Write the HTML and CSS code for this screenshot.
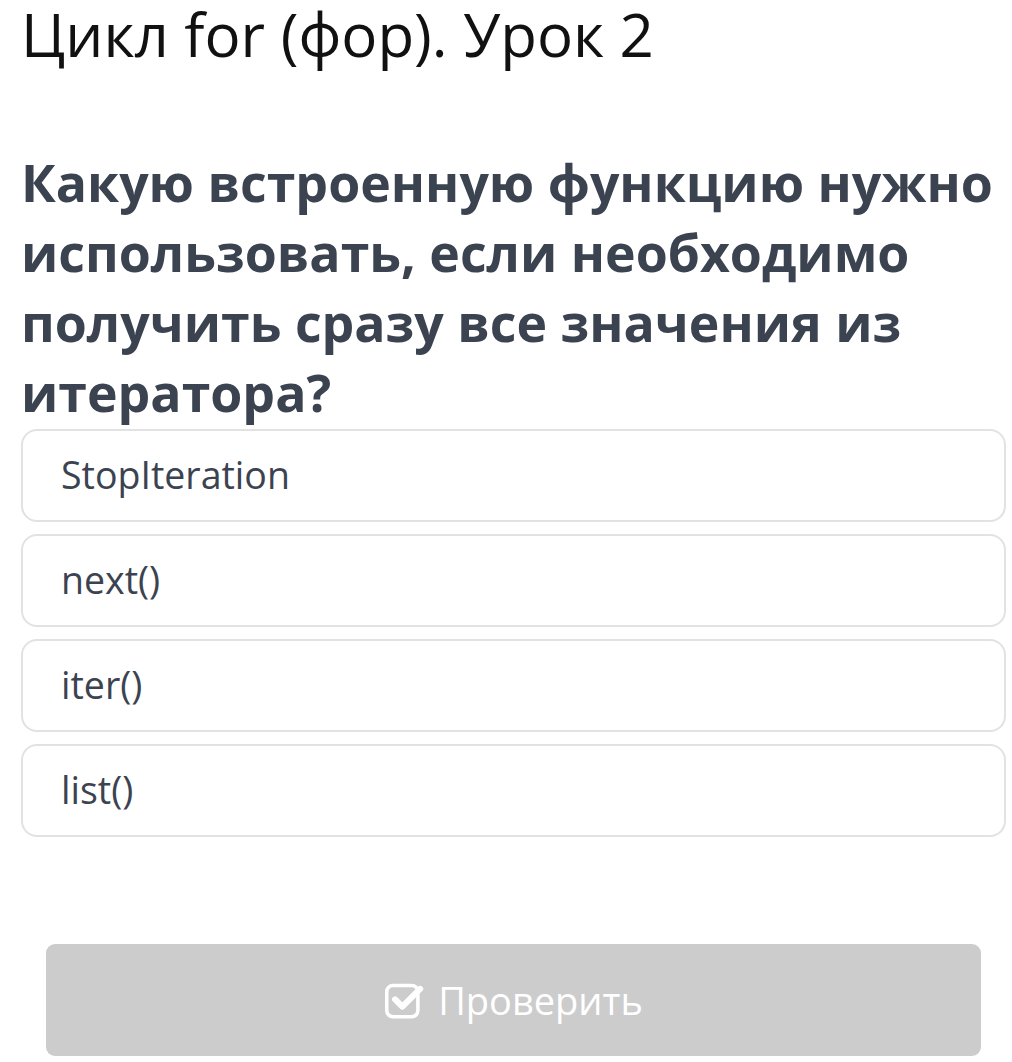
FILE: index.html
```html
<!DOCTYPE html>
<html lang="ru">
<head>
<meta charset="utf-8">
<link rel="stylesheet" href="styles.css">
</head>
<body>
<div class="page">
  <h1 class="title">Цикл for (фор). Урок 2</h1>
  <h2 class="question">Какую встроенную функцию нужно использовать, если необходимо получить сразу все значения из итератора?</h2>
  <div class="options">
    <div class="option">StopIteration</div>
    <div class="option">next()</div>
    <div class="option">iter()</div>
    <div class="option">list()</div>
  </div>
  <div class="actions">
    <button class="check-btn" type="button">
      <svg class="check-icon" viewBox="0 0 36 36" width="40" height="40" aria-hidden="true">
        <rect x="2.5" y="5" width="28" height="28" rx="5.5" fill="none" stroke="#fff" stroke-width="3.2"/>
        <path d="M10 17.5 L16.5 24 L32.5 8" fill="none" stroke="#fff" stroke-width="5.5" stroke-linecap="round" stroke-linejoin="round"/>
      </svg>
      <span>Проверить</span>
    </button>
  </div>
</div>
</body>
</html>
```
FILE: styles.css
```css
html, body {
  margin: 0;
  padding: 0;
  background: #ffffff;
}
.page {
  padding: 0 6px 0 21px;
  font-family: "Open Sans", "Noto Sans", sans-serif;
}
.title {
  margin: -7px 0 0 0;
  font-weight: 400;
  font-size: 60px;
  line-height: 82px;
  color: #111;
}
.question {
  margin: 72px 0 0 0;
  font-weight: 700;
  font-size: 51.8px;
  line-height: 70px;
  color: #3c4350;
}
.options {
  margin-top: 2px;
  display: flex;
  flex-direction: column;
  gap: 12px;
}
.option {
  height: 93px;
  box-sizing: border-box;
  border: 2px solid #e2e2e2;
  border-radius: 16px;
  padding: 0 0 3px 38px;
  display: flex;
  align-items: center;
  font-size: 37.5px;
  color: #3c4350;
}
.actions {
  padding: 107px 25px 0 25px;
}
.check-btn {
  width: 100%;
  height: 112px;
  border: none;
  border-radius: 9px;
  background: #cccccc;
  color: #fff;
  font-family: "Open Sans", "Noto Sans", sans-serif;
  font-size: 38px;
  display: flex;
  align-items: center;
  justify-content: center;
  gap: 14px;
  padding: 0;
}
.check-icon {
  display: block;
}
```
